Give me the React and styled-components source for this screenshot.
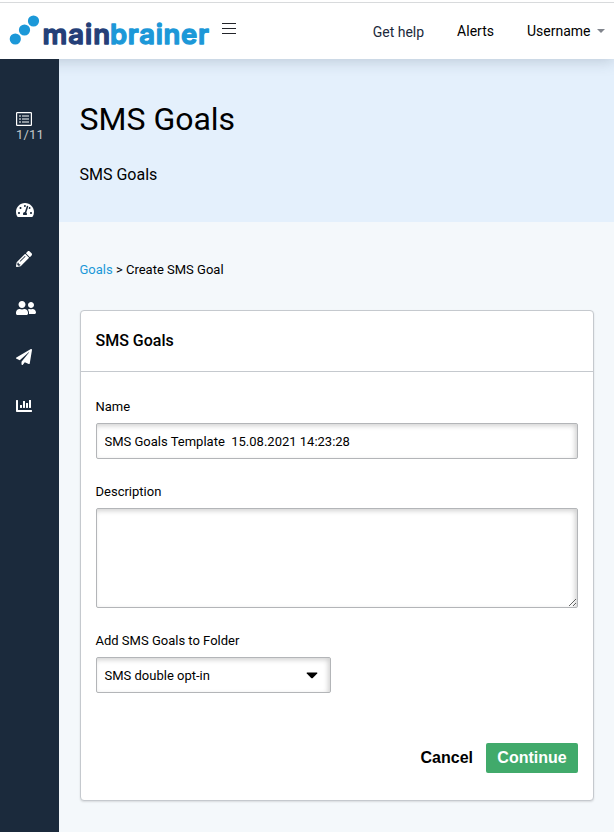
import React from "react";
import styled, { createGlobalStyle } from "styled-components";
import {
  FaTachometerAlt,
  FaPencilAlt,
  FaUserFriends,
  FaPaperPlane,
  FaChartBar,
} from "react-icons/fa";

const menu = [
  { icon: FaTachometerAlt, label: "Dashboard", width: 18 },
  { icon: FaPencilAlt, label: "Content", width: 16 },
  { icon: FaUserFriends, label: "Contacts", width: 20 },
  { icon: FaPaperPlane, label: "Campaigns", width: 16 },
  { icon: FaChartBar, label: "Reports", width: 16 },
];

const Logo = () => (
  <StyledLogo viewBox="0 0 202 42" role="img" aria-label="mainbrainer">
    <g fill="#1c98d8">
      <circle cx="7.3" cy="26" r="5.6" />
      <circle cx="16.5" cy="17" r="5.6" />
      <circle cx="25.5" cy="8" r="5.6" />
    </g>
    <LogoText x="34.5" y="31" textLength="67.5" fill="#243f78" stroke="#243f78">
      main
    </LogoText>
    <LogoText x="102" y="31" textLength="99" fill="#1c98d8" stroke="#1c98d8">
      brainer
    </LogoText>
  </StyledLogo>
);

const ListIcon = () => (
  <svg viewBox="0 0 16 16">
    <rect x=".6" y="1.6" width="14.8" height="12.8" rx=".6" fill="none" stroke="#fff" strokeWidth="1.2" />
    <path
      d="M3 5h2M6 5h7M3 8h2M6 8h7M3 11h2M6 11h7"
      stroke="#b4bbc0"
      strokeWidth="1.7"
    />
  </svg>
);

export default function App() {
  return (
    <>
      <GlobalStyle />
      <Header>
        <Logo />
        <Burger aria-label="Menu">
          <span />
          <span />
          <span />
        </Burger>
        <HeaderNav>
          <HelpLink>Get help</HelpLink>
          <NavLink>Alerts</NavLink>
          <NavLink>
            Username
            <Caret />
          </NavLink>
        </HeaderNav>
      </Header>
      <Layout>
        <Sidebar>
          <Progress>
            <ListIcon />
            1/11
          </Progress>
          {menu.map(({ icon: Icon, label, width }) => (
            <MenuItem key={label} $width={width} aria-label={label}>
              <Icon />
            </MenuItem>
          ))}
        </Sidebar>
        <Main>
          <Hero>
            <Title>SMS Goals</Title>
            <Subtitle>SMS Goals</Subtitle>
          </Hero>
          <Breadcrumbs>
            <a>Goals</a> &gt; Create SMS Goal
          </Breadcrumbs>
          <Card>
            <CardHeader>SMS Goals</CardHeader>
            <Form>
              <Label htmlFor="name">Name</Label>
              <Input id="name" defaultValue="SMS Goals Template  15.08.2021 14:23:28" />
              <Label htmlFor="description">Description</Label>
              <Textarea id="description" />
              <Label>Add SMS Goals to Folder</Label>
              <Select type="button">
                SMS double opt-in
                <svg width="12" height="7" viewBox="0 0 12 7">
                  <path d="M1 .5h10q.8.3.2 1L6.8 6q-.8.7-1.6 0L.8 1.5Q.2.8 1 .5z" />
                </svg>
              </Select>
              <Actions>
                <Cancel type="button">Cancel</Cancel>
                <Continue type="button">Continue</Continue>
              </Actions>
            </Form>
          </Card>
        </Main>
      </Layout>
    </>
  );
}

const GlobalStyle = createGlobalStyle`
  * {
    box-sizing: border-box;
  }
  body {
    margin: 0;
    font-family: Roboto, sans-serif;
    font-size: 13px;
    color: #000;
    background-color: #f4f8fb;
  }
`;

const Header = styled.header`
  position: relative;
  z-index: 1;
  display: flex;
  height: 59px;
  padding: 1px 9.5px 0 8px;
  border-top: 2px solid #fff;
  box-shadow: 0 2px 14px rgba(40, 60, 80, 0.22), inset 0 1px 0 #d8dadc;
  background-color: #fff;
`;

const StyledLogo = styled.svg`
  width: 202px;
  height: 42px;
  margin-top: 10px;
  overflow: visible;
`;

const LogoText = styled.text`
  font-family: Inter, sans-serif;
  font-size: 27.5px;
  font-weight: 600;
  stroke-width: 1.3;
  stroke-linejoin: round;
`;

const Burger = styled.button`
  display: flex;
  flex-direction: column;
  gap: 4px;
  width: 14px;
  height: 11px;
  margin: 20px 0 0 12px;
  padding: 0;
  border: none;
  background: none;
  span {
    width: 14px;
    height: 1px;
    background-color: #22242a;
  }
`;

const HeaderNav = styled.nav`
  display: flex;
  flex: 1;
  justify-content: flex-end;
  gap: 33px;
  padding-top: 19px;
  font-size: 14px;
  line-height: 18px;
`;

const NavLink = styled.a`
  display: flex;
  align-items: center;
  height: 18px;
`;

const HelpLink = styled(NavLink)`
  margin-top: 1px;
  color: #1b293b;
`;

const Caret = styled.i`
  margin-left: 6px;
  border: 4px solid transparent;
  border-top-color: #81858d;
  border-bottom: 0;
`;

const Layout = styled.div`
  display: flex;
  height: 773px;
`;

const Sidebar = styled.aside`
  position: relative;
  z-index: 2;
  width: 59px;
  padding: 52px 0 0 16px;
  background-color: #1b2a3c;
`;

const Progress = styled.div`
  height: 91px;
  font-size: 13px;
  line-height: 15px;
  letter-spacing: 0.2px;
  color: #c5c7c9;
  svg {
    display: block;
    width: 16px;
    height: 16px;
  }
`;

const MenuItem = styled.a`
  display: block;
  height: 49px;
  color: #fff;
  svg {
    display: block;
    width: ${({ $width }) => $width}px;
    height: 16px;
  }
`;

const Main = styled.main`
  flex: 1;
`;

const Hero = styled.section`
  height: 163px;
  padding: 41px 20.5px 0;
  background-color: #e4f0fc;
`;

const Title = styled.h1`
  margin: 0;
  font-size: 32px;
  line-height: 38px;
  font-weight: 400;
`;

const Subtitle = styled.p`
  margin: 27px 0 0;
  font-size: 16px;
  line-height: 20px;
`;

const Breadcrumbs = styled.div`
  padding: 40px 20.5px 0;
  line-height: 16px;
  a {
    color: #1c98d8;
  }
`;

const Card = styled.section`
  height: 491px;
  margin: 32px 20px 0 21px;
  border: 1px solid #c5c9ce;
  border-radius: 4px;
  box-shadow: 0 1px 2px rgba(0, 0, 0, 0.12);
  background-color: #fff;
`;

const CardHeader = styled.h2`
  height: 61px;
  margin: 0;
  padding: 0 14.5px;
  border-bottom: 1px solid #c5c9ce;
  font-size: 16px;
  line-height: 60px;
  font-weight: 500;
`;

const Form = styled.form`
  padding: 27px 15px 0;
`;

const Label = styled.label`
  display: block;
  margin: 0 0 8px -0.5px;
  line-height: 16px;
`;

const Input = styled.input`
  display: block;
  width: 100%;
  height: 36px;
  margin-bottom: 25px;
  padding: 0 7.5px;
  border: 1px solid #b3b5b8;
  border-radius: 2px;
  box-shadow: inset -2px 2px 5px rgba(0, 0, 0, 0.18);
  font: inherit;
  color: #000;
  background-color: #fff;
  outline: none;
`;

const Textarea = styled(Input).attrs({ as: "textarea" })`
  height: 100px;
`;

const Select = styled(Input).attrs({ as: "button" })`
  display: flex;
  align-items: center;
  justify-content: space-between;
  width: 235px;
  padding-right: 12px;
  margin-bottom: 50px;
`;

const Actions = styled.div`
  display: flex;
  justify-content: flex-end;
  align-items: center;
  gap: 13px;
`;

const Cancel = styled.button`
  height: 30px;
  padding: 0;
  border: none;
  background: none;
  font-family: "Liberation Sans", Arial, sans-serif;
  font-size: 16px;
  font-weight: 700;
  color: #000;
`;

const Continue = styled(Cancel)`
  width: 92px;
  border-radius: 2px;
  color: #fff;
  background-color: #41aa6b;
`;
